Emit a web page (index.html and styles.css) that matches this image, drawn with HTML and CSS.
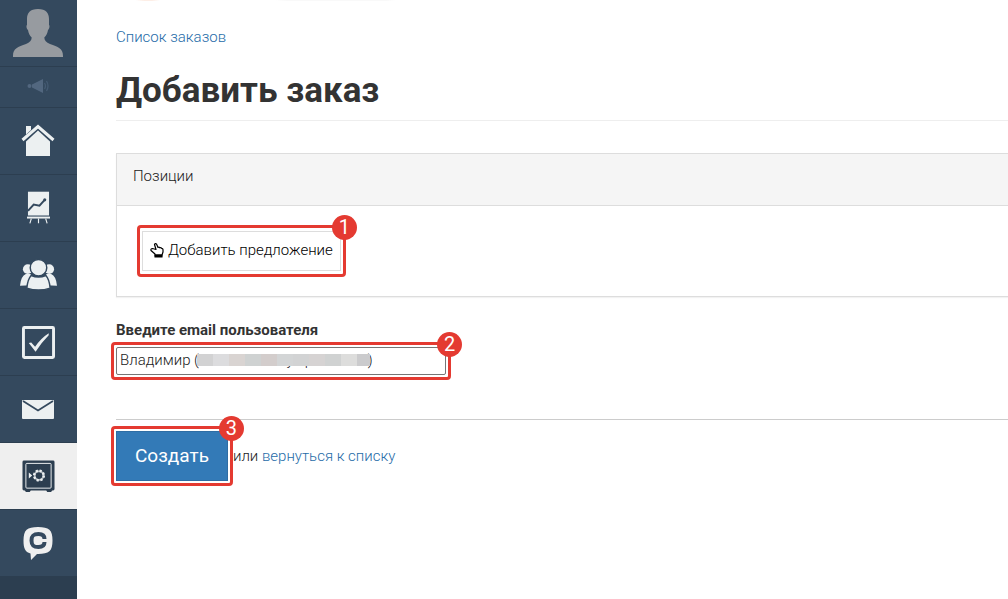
FILE: index.html
```html
<!DOCTYPE html>
<html lang="ru">
<head>
    <meta charset="UTF-8">
    <meta name="viewport" content="width=device-width, initial-scale=1.0">
    <title>Добавить заказ</title>
    <link rel="stylesheet" href="styles.css">
</head>
<body>
    <nav class="sidebar">
        <a href="#" class="menu-item profile" aria-label="Профиль">
            <svg width="52" height="50" viewBox="0 0 52 50" fill="#979ba0"><path d="M26 1c8 0 11 4 11 10v6c.9.500.6 4-1 5-.5 3.500-1.700 5.500-3.700 7.500 0 3 2 5 5.700 6.500 8 3 13 4 13 12v1H1v-1c0-8 5-9 13-12 3.700-1.500 5.700-3.500 5.700-6.500-2-2-3.200-4-3.700-7.500-1.600-1-1.900-4.500-1-5v-6C15 5 18 1 26 1z"/></svg>
        </a>
        <a href="#" class="menu-item notice" aria-label="Уведомления">
            <svg width="22" height="16" viewBox="0 0 22 16" fill="#52677f"><circle cx="2.500" cy="8" r="2"/><path d="M5 6.500L16 1v14L5 9.500z"/><path d="M17.500 5q2 3 0 6M19.500 3q3 5 0 10" fill="none" stroke="#455b73" stroke-width="1.300"/></svg>
        </a>
        <a href="#" class="menu-item" aria-label="Школа">
            <svg width="34" height="34" viewBox="0 0 34 34" fill="#ecf0f1"><path d="M5 2h5v4L5 10.500z"/><path d="M1.500 16L17 2.500 32.500 16" fill="none" stroke="#ecf0f1" stroke-width="3"/><path d="M17 6.500l12 11V32H5V17.500z"/></svg>
        </a>
        <a href="#" class="menu-item" aria-label="Аналитика">
            <svg width="23" height="34" viewBox="0 0 24 34" fill="#ecf0f1"><path d="M1 0h22v25H1z"/><path d="M1 20l6-6.500 6 1L18 9" fill="none" stroke="#34495e" stroke-width="2"/><circle cx="18.500" cy="8.500" r="1.600" fill="#34495e"/><path d="M1 25h22" stroke="#8794a0"/><path d="M0 26h24v2H0z"/><path d="M4.500 28L3 33M12 28v5M19.500 28l1.500 5" stroke="#ecf0f1" stroke-width="1.200"/></svg>
        </a>
        <a href="#" class="menu-item" aria-label="Пользователи">
            <svg width="37" height="34" viewBox="0 0 38 34" fill="#ecf0f1"><circle cx="8" cy="11" r="5"/><circle cx="30" cy="11" r="5"/><path d="M0 28q1-10 6-12h5v11.500zM38 28q-1-10-6-12h-5v11.500z"/><g stroke="#34495e" stroke-width="1.500"><path d="M11.500 17.500q7.500 3 15 0 3.500 3.500 4.500 13-12 4-24 0 1-9.500 4.500-13z"/><circle cx="19" cy="9.500" r="8.500"/></g></svg>
        </a>
        <a href="#" class="menu-item" aria-label="Задачи">
            <svg width="33" height="33" viewBox="0 0 34 34"><rect x="1.500" y="1.500" width="31" height="31" rx="1" fill="none" stroke="#ecf0f1" stroke-width="3"/><path d="M7 17.500l2.500-.5 4 4.500Q19 13 27.500 7.500v2Q20 17 14 26.500z" fill="#ecf0f1"/></svg>
        </a>
        <a href="#" class="menu-item" aria-label="Сообщения">
            <svg width="32" height="19" viewBox="0 0 32 19"><rect width="32" height="19" rx="1" fill="#ecf0f1"/><path d="M1 1l15 9.500L31 1" fill="none" stroke="#34495e" stroke-width="1.800"/></svg>
        </a>
        <a href="#" class="menu-item active" aria-label="Продажи">
            <svg width="33" height="33" viewBox="0 0 34 34"><path d="M2 .5h30q1.500 0 1.500 1.500v28q0 1.500-1.500 1.500h-1L30 33h-4l-1-1.500H9L8 33H4l-1-1.500H2Q.5 31.500.5 30V2Q.5.5 2 .5z" fill="#2c3e50"/><rect x="4" y="3.500" width="26" height="25.500" rx="1" fill="none" stroke="#ecf0f1"/><circle cx="17.500" cy="16" r="4.500" fill="none" stroke="#b4bbc2" stroke-width="2"/><circle cx="17.500" cy="16" r="5" fill="none" stroke="#ecf0f1" stroke-width="2.500" stroke-dasharray="2.200 1.727"/><path d="M7 13l3.500 3L7 19z" fill="#ecf0f1"/></svg>
        </a>
        <a href="#" class="menu-item chat" aria-label="Чат">
            <svg width="30" height="34" viewBox="0 0 30 34"><path d="M15 1c11 0 14.500 3 14.500 13.500S26 28 15 28h-1l-6 6-.5-6.500C2 26 .5 22 .5 14.500.5 4 4 1 15 1z" fill="#efefef"/><path d="M21.500 13c0-3.500-2-5-6-5-5 0-7 1.500-7 6.500s2 6.500 7 6.500c4 0 6-1.500 6-5" fill="none" stroke="#34495e" stroke-width="4"/></svg>
        </a>
    </nav>

    <main class="content">
        <a href="#" class="breadcrumb">Список заказов</a>
        <h1>Добавить заказ</h1>

        <form class="order-form">
            <section class="panel">
                <h2 class="panel-heading">Позиции</h2>
                <div class="panel-body">
                    <div class="callout">
                        <button type="button" class="btn-add">
                            <svg width="14" height="16" viewBox="0 0 14 16" fill="#fff" stroke="#000" stroke-width="1.200" stroke-linejoin="round"><path d="M5 12L1 8.500Q.5 6.500 2.500 6.500L6 7.500 4.500 2.500q.5-1.500 2-.5L8 5.500q1-.7 2 .3 1-.5 1.500.5 1.500 0 1.500 1.200V10l-1 3H5z"/><path d="M5 13h7v2H5z" fill="#000"/></svg>
                            <span>Добавить предложение</span>
                        </button>
                        <span class="badge">1</span>
                    </div>
                </div>
            </section>

            <label for="userEmail">Введите email пользователя</label>
            <div class="callout callout-tight email-field">
                <input type="text" id="userEmail" value="Владимир (&nbsp;&nbsp;&nbsp;&nbsp;&nbsp;&nbsp;&nbsp;&nbsp;&nbsp;&nbsp;&nbsp;&nbsp;&nbsp;&nbsp;&nbsp;&nbsp;&nbsp;&nbsp;&nbsp;&nbsp;&nbsp;&nbsp;&nbsp;&nbsp;y&nbsp;&nbsp;&nbsp;p&nbsp;&nbsp;&nbsp;&nbsp;&nbsp;&nbsp;&nbsp;&nbsp;&nbsp;&nbsp;&nbsp;&nbsp;&nbsp;&nbsp;&nbsp;)">
                <span class="mask"></span>
                <span class="badge">2</span>
            </div>

            <div class="actions">
                <div class="callout callout-tight">
                    <button type="submit" class="btn-create">Создать</button>
                    <span class="badge">3</span>
                </div>
                <span class="or">или <a href="#">вернуться к списку</a></span>
            </div>
        </form>
    </main>
</body>
</html>
```
FILE: styles.css
```css
* {
    box-sizing: border-box;
    margin: 0;
    padding: 0;
}
body {
    display: flex;
    min-height: 100vh;
    font-family: 'Roboto', 'Liberation Sans', sans-serif;
    font-size: 15px;
    font-weight: 300;
    line-height: 22px;
    color: #222;
    background-color: #fff;
}
a {
    color: #266ca8;
    text-decoration: none;
}
button, input {
    font: inherit;
}

/* Sidebar */
.sidebar {
    flex: none;
    width: 77px;
    background-color: #2c3e50;
}
.menu-item {
    display: flex;
    align-items: center;
    justify-content: center;
    height: 67px;
    padding-right: 1px;
    background-color: #34495e;
    border-bottom: 1px solid #2c3e50;
}
.notice {
    height: 41px;
    padding-bottom: 2px;
}
.active {
    background-color: #efefef;
}

/* Content */
.content {
    flex: 1;
    min-width: 0;
    padding-left: 39px;
}
/* Lower edge of the scrolled logo */
.content::before {
    content: "";
    display: block;
    height: 1px;
    margin-bottom: 25px;
    background: linear-gradient(90deg, #fff 20px, #fdeee6 28px 36px, #fff 44px 160px, #f9f9f9 170px 270px, #fff 280px);
}
.breadcrumb {
    display: block;
}
h1 {
    margin-top: 23px;
    padding-bottom: 9px;
    border-bottom: 1px solid #eee;
    color: #333;
    font-size: 35px;
    font-weight: 700;
    line-height: 40px;
}
.panel {
    margin: 32px 0 22px;
    border: 1px solid #ddd;
    border-right: none;
    box-shadow: 0 1px 1px rgba(0,0,0,0.05);
}
.panel-heading {
    padding: 11px 16px 18px;
    border-bottom: 1px solid #ddd;
    background-color: #f5f5f5;
    font-size: 15px;
    font-weight: 300;
    line-height: 22px;
}
.panel-body {
    padding: 19px 20px;
}
label {
    display: block;
    font-weight: 700;
    color: #333;
}

/* Red frames with step numbers */
.callout {
    position: relative;
    width: fit-content;
    padding: 3px 2px;
    border: 3px solid #e43a31;
    border-radius: 4px;
}
.callout-tight {
    margin-left: -5px;
    padding: 2px;
}
.badge {
    position: absolute;
    top: -13px;
    right: -14px;
    width: 25px;
    height: 25px;
    border-radius: 50%;
    background-color: #e43a31;
    color: #fff;
    font-size: 20px;
    font-weight: 400;
    line-height: 25px;
    text-align: center;
}
.btn-add {
    display: flex;
    align-items: center;
    gap: 4px;
    height: 40px;
    padding: 0 7px 2px;
    border: 1px solid #ddd;
    background-color: #fff;
    color: #000;
}
.email-field {
    margin-top: 1px;
}
.email-field input {
    display: block;
    width: 330px;
    height: 28px;
    padding: 0 3px 3px;
    border: 1px solid #767676;
    border-radius: 2px;
    background-color: #fff;
    color: #222;
}
.mask {
    position: absolute;
    top: 9px;
    left: 83px;
    width: 173px;
    height: 12px;
    background: linear-gradient(90deg, #d2d2d3 16px, #dcdcde 16px 32px, #d9d4d2 32px 48px, #cfd2d2 48px 64px, #d3cdcc 64px 80px, #d3d5d6 80px 96px, #d2d3d4 96px 112px, #d6d3d3 112px 128px, #d0d2d2 128px 144px, #dddddc 144px 160px, #cbcbcd 160px);
}
.actions {
    display: flex;
    align-items: center;
    margin-top: 39px;
    padding-top: 6px;
    border-top: 1px solid #ccc;
}
.btn-create {
    display: block;
    height: 50px;
    padding: 0 18px;
    border: 1px solid #2e6da4;
    background-color: #337ab7;
    color: #fff;
    font-size: 19px;
    font-weight: 400;
}
```
